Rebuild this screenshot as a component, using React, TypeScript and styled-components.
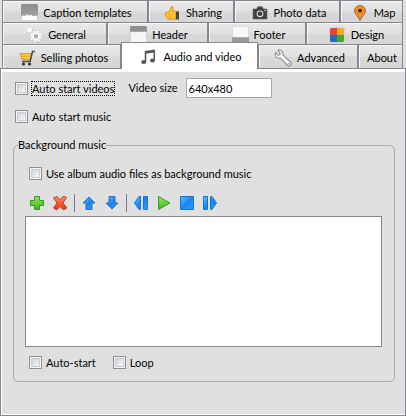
import React from "react";
import styled, { createGlobalStyle, css } from "styled-components";

const EDGE = "#868692";

const GlobalStyle = createGlobalStyle`
  *, *::before, *::after { box-sizing: border-box; }
  body {
    margin: 0;
    background: #e0e0e0;
    color: #000;
    font: 11px/14px Tahoma, Lato, "Liberation Sans", sans-serif;
  }
  button, input, select { font: inherit; color: inherit; }
`;

const Window = styled.main`
  display: flex;
  flex-direction: column;
  min-height: 100vh;
`;

const TabStrip = styled.div`
  padding: 0 3px 0 2px;
`;

const TabRow = styled.div<{ $columns: string; $last?: boolean }>`
  display: grid;
  grid-template-columns: ${(p) => p.$columns};
  height: ${(p) => (p.$last ? 24 : 22)}px;
`;

const Tab = styled.button<{ $active?: boolean }>`
  display: flex;
  align-items: center;
  justify-content: center;
  gap: 5px;
  min-width: 0;
  padding: 2px 0 0 3px;
  border: 1px solid ${EDGE};
  border-bottom: 0;
  background: linear-gradient(#e8e8e8, #e2e2e2 45%, #d8d8d8 55%, #d6d6d6);
  box-shadow: inset 1px 1px 0 #f6f6f6;
  white-space: nowrap;
  ${(p) =>
    p.$active &&
    css`
      position: relative;
      z-index: 1;
      margin: -2px 0 -1px;
      background: #fff;
      box-shadow: none;
    `}
`;

const Panel = styled.section`
  flex: 1;
  padding: 6px 10px 32px 12px;
  border: 1px solid ${EDGE};
  background: #e0e0e0;
  box-shadow: inset 0 3px 0 #fff, inset 1px -1px 0 #fff;
`;

const Options = styled.div`
  display: flex;
  align-items: center;
  height: 26px;
  padding-left: 2px;
`;

const OptionList = styled.div`
  display: grid;
  gap: 2px;
`;

const CheckLabel = styled.label`
  display: flex;
  align-items: center;
  gap: 3px;
  white-space: nowrap;
`;

const CheckBox = styled.input`
  appearance: none;
  flex: none;
  width: 13px;
  height: 13px;
  margin: 0;
  border: 1px solid #8e8f8f;
  background: linear-gradient(135deg, #c4c9d2, #f6f6f6 80%);
  box-shadow: inset 0 0 0 1px #f4f4f4, inset 0 0 0 2px #c8ccd2;
`;

const CheckText = styled.span<{ $focused?: boolean }>`
  border: 1px ${(p) => (p.$focused ? "dotted #000" : "solid transparent")};
  line-height: 13px;
`;

const SizeLabel = styled.label`
  display: flex;
  align-items: center;
  gap: 8px;
  margin-left: 13px;
  white-space: nowrap;
`;

const SizeInput = styled.input`
  width: 86px;
  height: 20px;
  padding: 0 2px;
  border: 1px solid #a5a5af;
  background: #fff;
`;

const Group = styled.fieldset`
  min-width: 0;
  margin: 9px 0 0;
  padding: 14px 12px 11px 11px;
  border: 1px solid #aaa;
  border-radius: 5px;
`;

const GroupTitle = styled.legend`
  margin-left: -7px;
  padding: 0;
`;

const CheckRow = styled.div`
  display: flex;
  gap: 16px;
  padding-left: 4px;
`;

const Toolbar = styled.div`
  display: flex;
  align-items: center;
  gap: 7px;
  height: 28px;
  margin-top: 7px;
  padding: 2px 0 0 4px;
`;

const ToolButton = styled.button`
  display: flex;
  padding: 0;
  border: 0;
  background: none;
`;

const Divider = styled.span`
  width: 1px;
  height: 18px;
  margin: 0 -1px;
  background: #777b88;
`;

const TrackList = styled.select`
  display: block;
  width: 100%;
  height: 131px;
  margin: 0 0 8px;
  border: 1px solid ${EDGE};
  border-radius: 0;
  background: #fff;
  outline: 0;
`;

const HiddenDefs = styled.svg`
  position: absolute;
`;

const Drawing = styled.svg`
  flex: none;
`;

type GlyphProps = { size?: number; padded?: boolean; children: React.ReactNode };

const Glyph = ({ size = 16, padded, children }: GlyphProps) => (
  <Drawing
    width={padded ? size + 2 : size}
    height={padded ? size + 2 : size}
    viewBox={padded ? "-1 -1 18 18" : "0 0 16 16"}
    aria-hidden="true"
  >
    {children}
  </Drawing>
);

const Gradients = () => (
  <HiddenDefs width="0" height="0" aria-hidden="true">
    <defs>
      <linearGradient id="blue" x1="0" y1="0" x2="1" y2="1">
        <stop offset="0" stopColor="#63c0ff" />
        <stop offset="0.5" stopColor="#1a86ea" />
        <stop offset="1" stopColor="#2fa4fb" />
      </linearGradient>
      <linearGradient id="green" x1="0" y1="0" x2="0" y2="1">
        <stop offset="0" stopColor="#98e45e" />
        <stop offset="1" stopColor="#3cb51e" />
      </linearGradient>
      <linearGradient id="red" x1="0" y1="0" x2="0" y2="1">
        <stop offset="0" stopColor="#ff8a66" />
        <stop offset="1" stopColor="#e0300f" />
      </linearGradient>
      <linearGradient id="grey" x1="0" y1="0" x2="0" y2="1">
        <stop offset="0" stopColor="#8d8d8d" />
        <stop offset="1" stopColor="#a9a9a9" />
      </linearGradient>
    </defs>
  </HiddenDefs>
);

const CaptionIcon = () => (
  <Glyph size={17}>
    <rect width="16" height="16" rx="1.5" fill="url(#grey)" />
    <path d="M0.500 11.800l2-1.200 1.600.8 1.600-2 1.600 1.700 2-1 2 1.300 4.200-.6v4.700h-15z" fill="#fff" />
  </Glyph>
);

const ThumbIcon = () => (
  <Glyph padded>
    <path d="M1 8.200L5.600 6 7 2c.6-1.300 2.200-.8 2.100.6L8.600 6H12v8H4.400c-1.200 0-1.700-.8-1.300-1.600-1-.4-1.200-1.400-.6-2.100C1.400 10 .5 9.200 1 8.200z" fill="#fdc62f" stroke="#c88a10" strokeWidth="0.8" />
    <path d="M4 9h4M4.300 11.200h3.500" stroke="#dc9b15" strokeWidth="0.7" />
    <path d="M12 6.500h3v8h-3z" fill="#454545" />
  </Glyph>
);

const CameraIcon = () => (
  <Glyph padded>
    <path d="M1 4h3.600l1.200-2.300h4.500L11.500 4H15v10H1z" fill="#414141" stroke="#666" strokeWidth="0.6" />
    <circle cx="8" cy="8.800" r="3.400" fill="#ddd" />
    <circle cx="8" cy="8.800" r="2.300" fill="#3a3a3a" />
    <path d="M12.500 5.500h1.500" stroke="#ddd" />
  </Glyph>
);

const PinIcon = () => (
  <Glyph padded>
    <path d="M8 15.500C7 12 2.500 9.500 2.500 5.700a5.500 5.200 0 0 1 11 0C13.500 9.500 9 12 8 15.500z" fill="#f58a1f" stroke="#79695a" strokeWidth="0.9" />
    <circle cx="8" cy="5.600" r="1.900" fill="#3c2a1c" />
  </Glyph>
);

const GearIcon = () => (
  <Glyph size={17}>
    <g fill="none" stroke="#aaa">
      <circle cx="9.500" cy="9.700" r="5.600" stroke="#b4b4b4" strokeWidth="1.800" strokeDasharray="2.400 2" />
      <circle cx="9.500" cy="9.700" r="4.900" stroke="#fff" strokeWidth="2" strokeDasharray="2 1.850" />
      <circle cx="9.500" cy="9.700" r="4.200" fill="#fff" stroke="#ddd" strokeWidth="0.6" />
      <circle cx="9.500" cy="9.700" r="1.700" fill="#bbb" />
      <circle cx="3" cy="3.500" r="2.500" stroke="#bbb" strokeWidth="1.200" strokeDasharray="1.300 1.100" />
      <circle cx="3" cy="3.500" r="1.600" stroke="#fff" strokeWidth="1.800" />
    </g>
  </Glyph>
);

const HeaderIcon = () => (
  <Glyph size={17}>
    <rect x="0.300" y="0.300" width="15.400" height="15.400" rx="1.300" fill="#f5f5f5" stroke="#bbb" strokeWidth="0.6" />
    <path d="M0 5.500v-4Q0 0 1.500 0h13Q16 0 16 1.500v4z" fill="#8f8f8f" />
  </Glyph>
);

const FooterIcon = () => (
  <Glyph size={17}>
    <rect x="0.300" y="0.300" width="15.400" height="15.400" rx="1.300" fill="#f8f8f8" stroke="#c4c4c4" strokeWidth="0.6" />
    <path d="M0 10.500h16v4q0 1.500-1.500 1.500h-13Q0 16 0 14.500z" fill="#999" />
  </Glyph>
);

const DesignIcon = () => (
  <Glyph padded>
    <rect x="0.300" y="0.300" width="15.400" height="15.400" rx="2" fill="#fff" stroke="#aaa" strokeWidth="0.5" />
    <path d="M1 8V2.500Q1 1 2.500 1H8v7z" fill="#ea4335" />
    <path d="M8 1h5.500Q15 1 15 2.500V8H8z" fill="#f8a92c" />
    <path d="M1 8h7v7H2.500Q1 15 1 13.500z" fill="#2567c4" />
    <path d="M8 8h7v5.500q0 1.500-1.500 1.500H8z" fill="#45a52c" />
  </Glyph>
);

const CartIcon = () => (
  <Glyph padded>
    <path d="M1 3.500h11.500l-1.300 6H3z" fill="#fbc62c" stroke="#b98d1c" strokeWidth="0.7" />
    <path d="M15.800 1.500h-2.300L11.200 11.500H3" fill="none" stroke="#444" strokeWidth="1.400" />
    <path d="M2 6.500h9.500" stroke="#e0a41b" strokeWidth="0.6" />
    <circle cx="4.500" cy="14" r="1.600" fill="#333" />
    <circle cx="10.500" cy="14" r="1.600" fill="#333" />
  </Glyph>
);

const NotesIcon = () => (
  <Glyph padded>
    <path d="M4.500 12.800V2.600l8.800-1.300v10M4.500 4l8.800-1.300" fill="none" stroke="#555" strokeWidth="1.500" />
    <ellipse cx="2.700" cy="13" rx="2.500" ry="2" fill="#555" />
    <ellipse cx="11.500" cy="11.500" rx="2.500" ry="2" fill="#555" />
  </Glyph>
);

const WrenchIcon = () => (
  <Glyph size={18}>
    <path d="M1.300 3.300L4 5.600l1.700-1.700-2.200-2.700c2.500-.9 5 1.100 4.400 3.900l6.700 6.600c1.800 2-.9 4.600-2.800 2.700L5.500 8C2.600 8.900.4 6.300 1.300 3.300z" fill="#f7f7f7" stroke="#858585" strokeWidth="0.9" />
    <circle cx="12.900" cy="13" r="0.800" fill="#999" />
  </Glyph>
);

const PlusIcon = () => (
  <Glyph>
    <path d="M5.500 1.500h5v4h4v5h-4v4h-5v-4h-4v-5h4z" fill="url(#green)" stroke="#379b27" />
  </Glyph>
);

const CrossIcon = () => (
  <Glyph>
    <path d="M1.500 3l3.500-1.500 3.200 3.200L11.500 1l3 1.500L11 8l4 5-3.500 1.800L8 11.500 4.500 15l-3-2L5 8z" fill="url(#red)" stroke="#d23a1c" />
  </Glyph>
);

const UpIcon = () => (
  <Glyph>
    <path d="M8 2l6 6h-3v6.500H5V8H2z" fill="url(#blue)" stroke="#2770bf" />
  </Glyph>
);

const DownIcon = () => (
  <Glyph>
    <path d="M8 14L2 8h3V1.500h6V8h3z" fill="url(#blue)" stroke="#2770bf" />
  </Glyph>
);

const BackIcon = () => (
  <Glyph>
    <path d="M7.500 1.500v13H6L1.500 8 6 1.500zM10.500 1.500h4v13h-4z" fill="url(#blue)" stroke="#1673cc" />
  </Glyph>
);

const PlayIcon = () => (
  <Glyph>
    <path d="M2.500 1.500L14 8 2.500 14.500z" fill="url(#green)" stroke="#379b27" />
  </Glyph>
);

const StopIcon = () => (
  <Glyph>
    <path d="M1.500 1.500h13v13h-13z" fill="url(#blue)" stroke="#1673cc" />
  </Glyph>
);

const ForwardIcon = () => (
  <Glyph>
    <path d="M1.500 1.500h4v13h-4zM8.500 1.500H10L14.500 8 10 14.500H8.500z" fill="url(#blue)" stroke="#1673cc" />
  </Glyph>
);

type TabItem = { label: string; icon?: React.ReactNode; active?: boolean };

const rows: { columns: string; tabs: TabItem[] }[] = [
  {
    columns: "146fr 86fr 106fr 63fr",
    tabs: [
      { label: "Caption templates", icon: <CaptionIcon /> },
      { label: "Sharing", icon: <ThumbIcon /> },
      { label: "Photo data", icon: <CameraIcon /> },
      { label: "Map", icon: <PinIcon /> },
    ],
  },
  {
    columns: "105fr 101fr 98fr 97fr",
    tabs: [
      { label: "General", icon: <GearIcon /> },
      { label: "Header", icon: <HeaderIcon /> },
      { label: "Footer", icon: <FooterIcon /> },
      { label: "Design", icon: <DesignIcon /> },
    ],
  },
  {
    columns: "119fr 137fr 100fr 45fr",
    tabs: [
      { label: "Selling photos", icon: <CartIcon /> },
      { label: "Audio and video", icon: <NotesIcon />, active: true },
      { label: "Advanced", icon: <WrenchIcon /> },
      { label: "About" },
    ],
  },
];

const Check = ({ label, focused }: { label: string; focused?: boolean }) => (
  <CheckLabel>
    <CheckBox type="checkbox" />
    <CheckText $focused={focused}>{label}</CheckText>
  </CheckLabel>
);

const Tool = ({ label, children }: { label: string; children: React.ReactNode }) => (
  <ToolButton type="button" aria-label={label}>
    {children}
  </ToolButton>
);

export default function App() {
  return (
    <Window>
      <GlobalStyle />
      <Gradients />
      <TabStrip role="tablist">
        {rows.map((row, i) => (
          <TabRow key={row.columns} $columns={row.columns} $last={i === rows.length - 1}>
            {row.tabs.map((tab) => (
              <Tab key={tab.label} type="button" role="tab" aria-selected={!!tab.active} $active={tab.active}>
                {tab.icon}
                {tab.label}
              </Tab>
            ))}
          </TabRow>
        ))}
      </TabStrip>
      <Panel role="tabpanel">
        <OptionList>
          <Options>
            <Check label="Auto start videos" focused />
            <SizeLabel>
              Video size
              <SizeInput type="text" defaultValue="640x480" />
            </SizeLabel>
          </Options>
          <Options>
            <Check label="Auto start music" />
          </Options>
        </OptionList>
        <Group>
          <GroupTitle>Background music</GroupTitle>
          <CheckRow>
            <Check label="Use album audio files as background music" />
          </CheckRow>
          <Toolbar role="toolbar">
            <Tool label="Add"><PlusIcon /></Tool>
            <Tool label="Remove"><CrossIcon /></Tool>
            <Divider />
            <Tool label="Move up"><UpIcon /></Tool>
            <Tool label="Move down"><DownIcon /></Tool>
            <Divider />
            <Tool label="Previous"><BackIcon /></Tool>
            <Tool label="Play"><PlayIcon /></Tool>
            <Tool label="Stop"><StopIcon /></Tool>
            <Tool label="Next"><ForwardIcon /></Tool>
          </Toolbar>
          <TrackList multiple aria-label="Background music files" />
          <CheckRow>
            <Check label="Auto-start" />
            <Check label="Loop" />
          </CheckRow>
        </Group>
      </Panel>
    </Window>
  );
}
